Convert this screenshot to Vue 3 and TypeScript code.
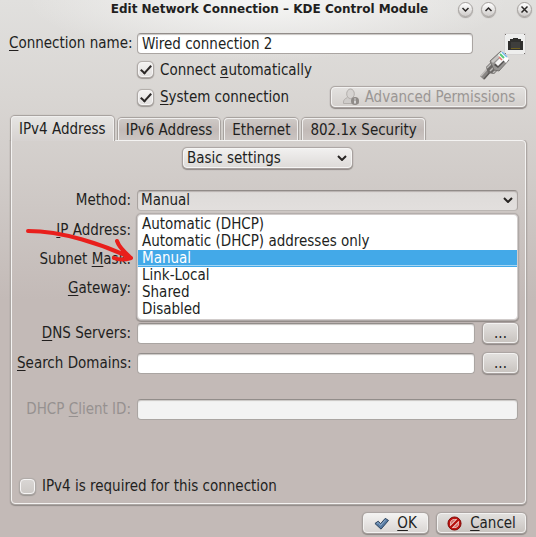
<script setup lang="ts">
import { ref } from 'vue'

interface Tab {
  id: string
  label: string
}

const tabs: Tab[] = [
  { id: 'ipv4', label: 'IPv4 Address' },
  { id: 'ipv6', label: 'IPv6 Address' },
  { id: 'ethernet', label: 'Ethernet' },
  { id: 'security', label: '802.1x Security' },
]
const methods: string[] = [
  'Automatic (DHCP)',
  'Automatic (DHCP) addresses only',
  'Manual',
  'Link-Local',
  'Shared',
  'Disabled',
]

const activeTab = ref('ipv4')
const method = ref('Manual')
const connectionName = ref('Wired connection 2')
const autoConnect = ref(true)
const systemConnection = ref(true)
const required = ref(false)
const ipAddress = ref('')
const subnetMask = ref('')
const gateway = ref('')
const dnsServers = ref('')
const searchDomains = ref('')
</script>

<template>
  <form class="window" @submit.prevent>
    <header class="titlebar">
      <h1>Edit Network Connection – KDE Control Module</h1>
      <div class="window-buttons">
        <button type="button" class="round" aria-label="Minimize">
          <svg viewBox="0 0 15 15"><path d="M4.5 6l3 3 3-3" /></svg>
        </button>
        <button type="button" class="round" aria-label="Maximize">
          <svg viewBox="0 0 15 15"><path d="M4.5 9l3-3 3 3" /></svg>
        </button>
        <button type="button" class="round close" aria-label="Close">
          <svg viewBox="0 0 15 15"><path d="M4.5 4.5l6 6M10.5 4.5l-6 6" /></svg>
        </button>
      </div>
    </header>

    <section class="general">
      <div class="general-fields">
        <label class="field-label" for="name"><u>C</u>onnection name:</label>
        <input id="name" v-model="connectionName" class="field" type="text" />
        <label class="check indent">
          <input v-model="autoConnect" type="checkbox" />
          <span>Connect <u>a</u>utomatically</span>
        </label>
      </div>
      <svg class="wired" viewBox="0 0 46 48" aria-hidden="true">
        <rect x="24.5" y=".5" width="21" height="21" fill="#eeeeed" stroke="#d6d4d3" />
        <g fill="#77716e">
          <rect x="25" y="1" width="1" height="1" /><rect x="44" y="1" width="1" height="1" />
          <rect x="25" y="20" width="1" height="1" /><rect x="44" y="20" width="1" height="1" />
        </g>
        <path d="M28 8h2V6h3V5h5v1h3v2h2v9H28z" fill="#30302e" />
        <path d="M31 9h9v6h-9z" fill="#3e3e3c" />
        <path d="M31 15.5h9" stroke="#6f601f" />
        <path d="M2 45l7-8" stroke="#8a8785" stroke-width="5" />
        <path d="M1 43l7-8" stroke="#c0bdbb" stroke-width="1.5" />
        <path d="M4 46l7-8" stroke="#5d5a58" stroke-width="1.5" />
        <path d="M6 34l6-6 7 8-5 5-6-1z" fill="#6c6967" />
        <path d="M7 35l5-5M10 38l5-5M13 40l4-4" stroke="#bdbbb9" stroke-width="1.5" />
        <path d="M10 28l11-10 8 9-10 11-5-1z" fill="#969492" stroke="#6a6765" stroke-width=".8" />
        <path d="M11 28l10-9 2 2-10 9z" fill="#c7c5c3" />
        <path d="M14 32l9-8 3 3-8 8z" fill="#545150" />
        <path d="M18 22l4-4 7 8-3 4z" fill="#fff" />
        <path d="M15 30l6-6 3 3-6 6z" fill="#f6f5f5" />
        <path d="M20 21l4 4" stroke="#59c978" stroke-width="2" />
        <path d="M22 19l5 5" stroke="#79b8ea" stroke-width="1.5" />
        <path d="M19 24l3 3" stroke="#e57b71" stroke-width="1.5" />
      </svg>
    </section>

    <section class="permissions">
      <label class="check">
        <input v-model="systemConnection" type="checkbox" />
        <span><u>S</u>ystem connection</span>
      </label>
      <button type="button" class="btn advanced" disabled>
        <svg viewBox="0 0 18 18" aria-hidden="true">
          <path
            d="M5.500 9.500C3 10.500 1.500 12 1.500 14v1.500h15V14c0-2-1.500-3.500-4-4.500"
            fill="#cfccca" stroke="#b3afac"
          />
          <ellipse cx="8.500" cy="5.800" rx="3.800" ry="4.800" fill="#d6d3d1" stroke="#b3afac" />
          <circle cx="13" cy="13" r="4" fill="#8f8b88" />
          <path d="M13 12.500v3M13 10.500v1" stroke="#eee" stroke-width="1.500" />
        </svg>
        Advanced Permissions
      </button>
    </section>

    <div class="tabs" role="tablist">
      <button
        v-for="tab in tabs"
        :key="tab.id"
        type="button"
        role="tab"
        class="tab"
        :class="{ active: tab.id === activeTab }"
        :aria-selected="tab.id === activeTab"
        @click="activeTab = tab.id"
      >
        {{ tab.label }}
      </button>
    </div>

    <section class="pane" role="tabpanel">
      <div class="combo basic">
        <select aria-label="Settings page">
          <option>Basic settings</option>
          <option>Routes</option>
        </select>
        <svg viewBox="0 0 10 6" aria-hidden="true"><path d="M1 1l4 4 4-4" /></svg>
      </div>

      <div class="form address">
        <label class="field-label" for="method">Method:</label>
        <div class="combo method">
          <select id="method" v-model="method">
            <option v-for="m in methods" :key="m">{{ m }}</option>
          </select>
          <svg viewBox="0 0 10 6" aria-hidden="true"><path d="M1 1l4 4 4-4" /></svg>
          <ul class="popup" role="listbox" aria-label="Method">
            <li
              v-for="m in methods"
              :key="m"
              role="option"
              :aria-selected="m === method"
              :class="{ selected: m === method }"
              @click="method = m"
            >
              {{ m }}
            </li>
          </ul>
        </div>

        <label class="field-label" for="ip"><u>I</u>P Address:</label>
        <input id="ip" v-model="ipAddress" class="field wide" type="text" />
        <label class="field-label" for="mask">Subnet <u>M</u>ask:</label>
        <input id="mask" v-model="subnetMask" class="field wide" type="text" />
        <label class="field-label" for="gateway"><u>G</u>ateway:</label>
        <input id="gateway" v-model="gateway" class="field wide" type="text" />
      </div>

      <div class="form servers">
        <label class="field-label" for="dns"><u>D</u>NS Servers:</label>
        <input id="dns" v-model="dnsServers" class="field" type="text" />
        <button type="button" class="btn more" aria-label="Edit DNS servers">...</button>
        <label class="field-label" for="search"><u>S</u>earch Domains:</label>
        <input id="search" v-model="searchDomains" class="field" type="text" />
        <button type="button" class="btn more" aria-label="Edit search domains">...</button>
      </div>

      <div class="form client">
        <label class="field-label disabled" for="client">DHCP <u>C</u>lient ID:</label>
        <input id="client" class="field wide" type="text" disabled />
      </div>

      <label class="check required">
        <input v-model="required" type="checkbox" />
        <span>IPv4 is required for this connection</span>
      </label>

      <svg class="arrow" viewBox="0 0 112 40" aria-hidden="true">
        <path d="M6 8C40 8 80 21 109 35M95 18c2 6 7 11 14 17M92 35c5 2 11 2 17 0" />
      </svg>
    </section>

    <footer class="actions">
      <button type="submit" class="btn ok">
        <svg viewBox="0 0 16 16" aria-hidden="true">
          <path d="M1 8l3.500-2.500L7 8.200 12 2.500l3.500 2.200-8 9.300z" fill="#587ba3" stroke="#293f59" />
          <path d="M3 8l1.500-1L7 10l5.300-6" fill="none" stroke="#9bb5d1" />
        </svg>
        <span><u>O</u>K</span>
      </button>
      <button type="button" class="btn cancel">
        <svg viewBox="0 0 16 16" aria-hidden="true">
          <circle cx="8" cy="8" r="7" fill="#c01410" stroke="#7c0906" />
          <circle cx="8" cy="8" r="4.300" fill="#cf6a65" stroke="#f0c9c6" />
          <path d="M4.500 11.500l7-7" stroke="#f0c9c6" stroke-width="4.500" />
          <path d="M4 12l8-8" stroke="#b5100c" stroke-width="2.500" />
        </svg>
        <span><u>C</u>ancel</span>
      </button>
    </footer>
  </form>
</template>

<style>
body {
  background: #c3bab7;
}
</style>

<style scoped>
* {
  box-sizing: border-box;
}
.window {
  display: flex;
  flex-direction: column;
  min-height: 100vh;
  padding: 0 10px 5px 9px;
  color: #221f1e;
  font: 15px/20px "DejaVu Sans Condensed", "DejaVu Sans", sans-serif;
  background:
    radial-gradient(ellipse 240px 60px at 50% 0, #f6f6f5 0, rgba(246, 246, 245, 0) 100%),
    linear-gradient(#e1e0de 0, #d9d6d3 95px, #d1ccc9 175px, #c3bab7 300px);
}
button,
input,
select {
  margin: 0;
  font: inherit;
  color: inherit;
}
u {
  text-decoration: underline;
  text-decoration-thickness: 1px;
  text-underline-offset: 2px;
  text-decoration-skip-ink: none;
}
svg {
  display: block;
  flex: none;
}
.titlebar {
  display: flex;
  align-items: center;
  height: 18px;
}
h1 {
  flex: 1;
  margin: 0;
  padding-left: 72px;
  text-align: center;
  white-space: nowrap;
  font-family: "DejaVu Sans", sans-serif;
  font-size: 12px;
  line-height: 18px;
}
.window-buttons {
  display: flex;
  gap: 8px;
  margin-right: -6px;
}
.round {
  width: 15px;
  height: 15px;
  padding: 0;
  border: 1px solid #a5a19e;
  border-radius: 50%;
  background: linear-gradient(#fff, #cfccca);
  box-shadow: 0 1px 1px #a5a19e;
}
.round svg {
  margin: -1px;
  width: 15px;
  height: 15px;
}
.round.close {
  margin-left: 13px;
}
.round path {
  fill: none;
  stroke: #292625;
  stroke-width: 1.5;
}
.general {
  display: flex;
  gap: 7px;
  margin-top: 15px;
  height: 48px;
}
.general-fields {
  flex: 1;
  display: grid;
  grid-template-columns: 122px 1fr;
  grid-template-rows: 21px 21px;
  gap: 5px 6px;
}
.indent {
  grid-column: 2;
}
.wired {
  width: 46px;
  height: 48px;
}
.field-label {
  text-align: right;
  white-space: nowrap;
}
.field {
  width: 100%;
  min-width: 0;
  height: 21px;
  padding: 0 4px;
  border: 1px solid #aaa5a2;
  border-top-color: #928d8a;
  border-radius: 4px;
  background: #fff;
  box-shadow: inset 0 1px 1px #c9c6c4;
  outline: 0;
}
.field:disabled {
  background: #f3f3f3;
}
.disabled {
  color: #969190;
}
.check {
  display: flex;
  align-items: center;
  gap: 7px;
  padding-left: 1px;
  white-space: nowrap;
}
.check input {
  display: grid;
  place-items: center;
  width: 15px;
  height: 15px;
  appearance: none;
  border: 1px solid #f6f5f5;
  border-radius: 4px;
  background: linear-gradient(#f3f2f1, #e2e0df);
  box-shadow: 0 0 1px 1px #b0aba8, 0 1px 1px 1px #9a9592;
}
.check input:checked::after {
  content: "";
  width: 4px;
  height: 9px;
  margin-bottom: 2px;
  border: solid #2b2827;
  border-width: 0 2px 2px 0;
  transform: rotate(42deg);
}
.permissions {
  display: flex;
  align-items: center;
  justify-content: space-between;
  height: 22px;
  margin-top: 5px;
  padding-left: 128px;
}
.btn {
  display: flex;
  align-items: center;
  justify-content: center;
  height: 20px;
  padding: 0;
  white-space: nowrap;
  border: 1px solid #f3f2f1;
  border-radius: 4px;
  background: linear-gradient(#e2e0de, #c9c4c0);
  box-shadow: 0 0 1px 1px #aaa4a1, 0 1px 1px 1px #8c8683;
}
.advanced {
  gap: 5px;
  width: 195px;
  color: #9a9694;
  background: linear-gradient(#e3e1df, #d4d0cd);
}
.advanced svg {
  width: 18px;
  height: 18px;
}
.tabs {
  display: flex;
  align-items: flex-end;
  gap: 4px;
  height: 25px;
  margin: 7px 0 0 2px;
}
.tab {
  height: 22px;
  padding: 0 7px;
  white-space: nowrap;
  border: 1px solid #f0efee;
  border-bottom: 0;
  border-radius: 4px 4px 0 0;
  background: linear-gradient(#cec9c6, #c2bab7 50%, #cbc5c2);
  box-shadow: 0 0 1px 1px #a49e9b;
  clip-path: inset(-2px -2px 0 -2px);
}
.tab.active {
  z-index: 1;
  height: 25px;
  margin-bottom: -1px;
  background: linear-gradient(#e6e5e3, #d6d2d0);
}
.pane {
  position: relative;
  flex: 1;
  margin-left: 2px;
  padding: 7px 7px 7px 5px;
  border: 1px solid #f4f3f2;
  border-radius: 0 4px 4px 4px;
  box-shadow: 0 0 1px 1px #b0aaa7, 0 1px 1px 1px #8e8885;
  clip-path: inset(0 -3px -3px -3px);
}
.combo {
  position: relative;
  display: flex;
  align-items: center;
  justify-content: flex-end;
  height: 20px;
}
.combo select {
  width: 100%;
  height: 20px;
  padding: 0 3px;
  appearance: none;
  border: 1px solid #f6f5f4;
  border-radius: 4px;
  line-height: 18px;
  background: linear-gradient(#f1f0ef, #dedbd9);
  box-shadow: 0 0 1px 1px #aaa4a1, 0 1px 1px 1px #8e8885;
}
.combo > svg {
  position: absolute;
  right: 5px;
  width: 10px;
  height: 6px;
  pointer-events: none;
}
.combo > svg path {
  fill: none;
  stroke: #282523;
  stroke-width: 2;
}
.basic {
  width: 169px;
  margin: 0 auto;
}
.form {
  display: grid;
  grid-template-columns: 114px 1fr 37px;
  column-gap: 6px;
  row-gap: 9px;
  grid-auto-rows: 20px;
}
.address {
  grid-template-rows: 21px;
  margin-top: 22px;
}
.wide,
.method {
  grid-column: 2 / 4;
}
.combo.method select {
  height: 21px;
  border-color: #918b88 #aaa4a1 #bbb6b3;
  background: linear-gradient(#dedbd9, #e2dfdd);
  box-shadow: inset 0 1px 1px #b7b1ae;
}
.popup {
  position: absolute;
  z-index: 2;
  top: 24px;
  left: 0;
  right: 0;
  margin: 0;
  padding: 1px 0;
  list-style: none;
  border: 1px solid #d1cccb;
  border-radius: 4px;
  background: #fff;
  box-shadow: 0 0 1px 1px #b2acaa, 0 1px 1px 1px #8a8481;
}
.popup li {
  height: 17px;
  padding-left: 4px;
  line-height: 17px;
}
.popup .selected {
  color: #fff;
  background: linear-gradient(#43a9e8 15px, #a5d6f4 15px, #a5d6f4 16px, #43a9e8 16px);
}
.servers {
  margin-top: 25px;
  row-gap: 10px;
}
.more {
  margin-left: 2px;
  width: 35px;
}
.client {
  margin-top: 26px;
}
.required {
  width: fit-content;
  margin: 57px 0 0 2px;
}
.required input {
  background: linear-gradient(#d9d6d4, #cdc9c6);
}
.arrow {
  position: absolute;
  z-index: 3;
  top: 82px;
  left: 10px;
  width: 112px;
  height: 40px;
  pointer-events: none;
}
.arrow path {
  fill: none;
  stroke: #e91f1c;
  stroke-width: 4;
  stroke-linecap: round;
  stroke-linejoin: round;
}
.actions {
  display: flex;
  justify-content: flex-end;
  gap: 9px;
  margin-top: 9px;
}
.actions .btn {
  gap: 8px;
}
.actions svg {
  width: 15px;
  height: 15px;
}
.ok {
  width: 65px;
  background: linear-gradient(#f3f2f1, #dad6d4);
}
.cancel {
  width: 89px;
}
</style>
